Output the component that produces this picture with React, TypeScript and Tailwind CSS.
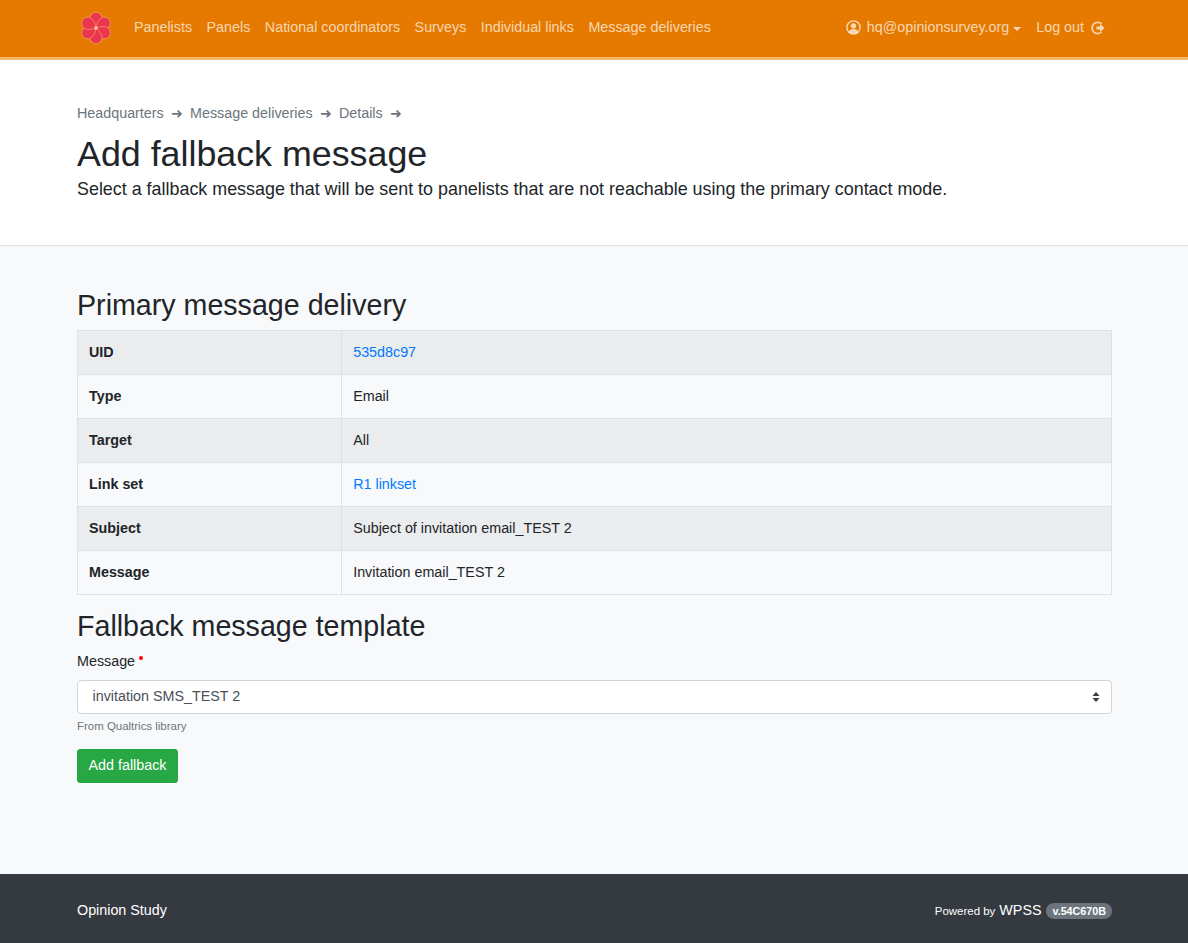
const navLinks = [
  "Panelists",
  "Panels",
  "National coordinators",
  "Surveys",
  "Individual links",
  "Message deliveries",
];

const crumbs = ["Headquarters", "Message deliveries", "Details"];

const rows = [
  { label: "UID", value: "535d8c97", link: true },
  { label: "Type", value: "Email" },
  { label: "Target", value: "All" },
  { label: "Link set", value: "R1 linkset", link: true },
  { label: "Subject", value: "Subject of invitation email_TEST 2" },
  { label: "Message", value: "Invitation email_TEST 2" },
];

const Logo = () => (
  <svg width="30" height="32" viewBox="-15 -16 30 32" className="block">
    {[0, 60, 120, 180, 240, 300].map((angle) => (
      <path
        key={angle}
        transform={`rotate(${angle})`}
        d="M0 0 C-2.6 -2.4 -6 -5.4 -6 -9.6 A6 6 0 0 1 6 -9.6 C6 -5.4 2.6 -2.4 0 0 Z"
        fill="#e9364c"
        stroke="#f59a70"
        strokeWidth="0.7"
      />
    ))}
    <circle r="1.8" fill="#f7c9a0" />
  </svg>
);

const UserIcon = () => (
  <svg width="15" height="15" viewBox="0 0 15 15" className="block" fill="none">
    <circle cx="7.5" cy="7.5" r="6.6" stroke="currentColor" strokeWidth="1.4" />
    <circle cx="7.5" cy="5.8" r="2.6" fill="currentColor" />
    <path d="M3 12 C3.4 9.8 5 9 7.5 9 C10 9 11.6 9.8 12 12 C10.8 13.2 9.2 13.8 7.5 13.8 C5.8 13.8 4.2 13.2 3 12 Z" fill="currentColor" />
  </svg>
);

const LogoutIcon = () => (
  <svg width="14" height="14" viewBox="0 0 14 14" className="block" fill="none">
    <path d="M10.6 3 A5.6 5.6 0 1 0 10.6 11" stroke="currentColor" strokeWidth="1.6" />
    <path d="M5.5 5.6 H9 V3 L13.6 7 L9 11 V8.4 H5.5 Z" fill="currentColor" />
  </svg>
);

const App = () => {
  return (
    <div className="min-h-[943px] flex flex-col bg-[#f8f9fa] text-[#212529] font-['Liberation_Sans',Arial,sans-serif] text-[14.32px] leading-[21.5px]">
      <nav className="h-[60px] shrink-0 bg-[#e67a00] border-b-[3px] border-[#f5b56d] pl-[81px] pr-[83px] pb-[2px] flex items-center justify-between text-white/70">
        <div className="flex items-center">
          <Logo />
          <ul className="flex items-center gap-[14.5px] ml-[23px]">
            {navLinks.map((link) => (
              <li key={link}>
                <a href="#">{link}</a>
              </li>
            ))}
          </ul>
        </div>
        <div className="flex items-center">
          <a href="#" className="flex items-center">
            <UserIcon />
            <span className="ml-[6px]">hq@opinionsurvey.org</span>
            <span className="ml-[4px] mt-[2px] w-0 h-0 border-x-[4px] border-x-transparent border-t-[4px] border-t-current" />
          </a>
          <a href="#" className="flex items-center ml-[15px]">
            Log out
            <span className="ml-[7px]">
              <LogoutIcon />
            </span>
          </a>
        </div>
      </nav>

      <header className="h-[186px] shrink-0 bg-white border-b border-[#dee2e6] pl-[77px] pr-[76px] pt-[43px]">
        <ol className="flex items-center text-[#6c757d]">
          {crumbs.map((crumb) => (
            <li key={crumb} className="flex items-center">
              <a href="#">{crumb}</a>
              <span className="mx-[7.3px] font-['DejaVu_Sans',sans-serif] text-[14px]">➜</span>
            </li>
          ))}
        </ol>
        <h1 className="text-[35.8px] leading-[43px] mt-[8px] font-normal">Add fallback message</h1>
        <p className="text-[17.9px] leading-[27px]">
          Select a fallback message that will be sent to panelists that are not reachable using the primary contact mode.
        </p>
      </header>

      <main className="flex-grow pl-[77px] pr-[76px] pt-[42px]">
        <h2 className="text-[28.64px] leading-[34px] font-normal mb-[8px]">Primary message delivery</h2>
        <table className="w-full border-collapse border border-[#dee2e6]">
          <tbody>
            {rows.map((row, i) => (
              <tr key={row.label} className={i % 2 === 0 ? "h-[44px] bg-[#ebecee]" : "h-[44px]"}>
                <th className="w-[264px] px-[11px] text-left font-bold border border-[#dee2e6]">{row.label}</th>
                <td className="pl-[11.2px] pr-[11px] border border-[#dee2e6]">
                  {row.link ? (
                    <a href="#" className="text-[#007bff]">
                      {row.value}
                    </a>
                  ) : (
                    row.value
                  )}
                </td>
              </tr>
            ))}
          </tbody>
        </table>

        <h2 className="text-[28.64px] leading-[34px] font-normal mt-[14px]">Fallback message template</h2>
        <form className="mt-[8px]">
          <label className="flex items-start h-[22px]">
            Message
            <span className="ml-[4px] mt-[5px] w-[4px] h-[4px] rounded-full bg-[#ff0000]" />
          </label>
          <div className="relative mt-[7px]">
            <select
              defaultValue="invitation SMS_TEST 2"
              className="block w-full h-[34px] appearance-none bg-white border border-[#ced4da] rounded-[4px] pl-[14.5px] pr-[28px] text-[#495057]"
            >
              <option>invitation SMS_TEST 2</option>
            </select>
            <svg
              width="8"
              height="10"
              viewBox="0 0 8 10"
              className="absolute right-[12px] top-[12px] pointer-events-none text-[#343a40]"
              fill="currentColor"
            >
              <path d="M4 0 L7.5 4 H0.5 Z M4 10 L0.5 6 H7.5 Z" />
            </svg>
          </div>
          <small className="block text-[11.46px] leading-[17px] text-[#6c757d] mt-[4px]">From Qualtrics library</small>
          <button
            type="button"
            className="block mt-[14px] w-[101px] h-[34px] bg-[#28a745] border border-[#28a745] rounded-[3px] text-white"
          >
            Add fallback
          </button>
        </form>
      </main>

      <footer className="h-[69px] shrink-0 bg-[#343a40] pl-[77px] pr-[76px] pt-[5px] flex items-center justify-between text-white">
        <span>Opinion Study</span>
        <span className="flex items-center">
          <span className="text-[11.46px] mt-[1px]">Powered by</span>
          <span className="ml-[4px] text-[14.32px]">WPSS</span>
          <span className="ml-[5px] h-[16px] px-[6px] rounded-full bg-[#6c757d] text-[10.74px] font-bold leading-[16px]">
            v.54C670B
          </span>
        </span>
      </footer>
    </div>
  );
};

export default App;
